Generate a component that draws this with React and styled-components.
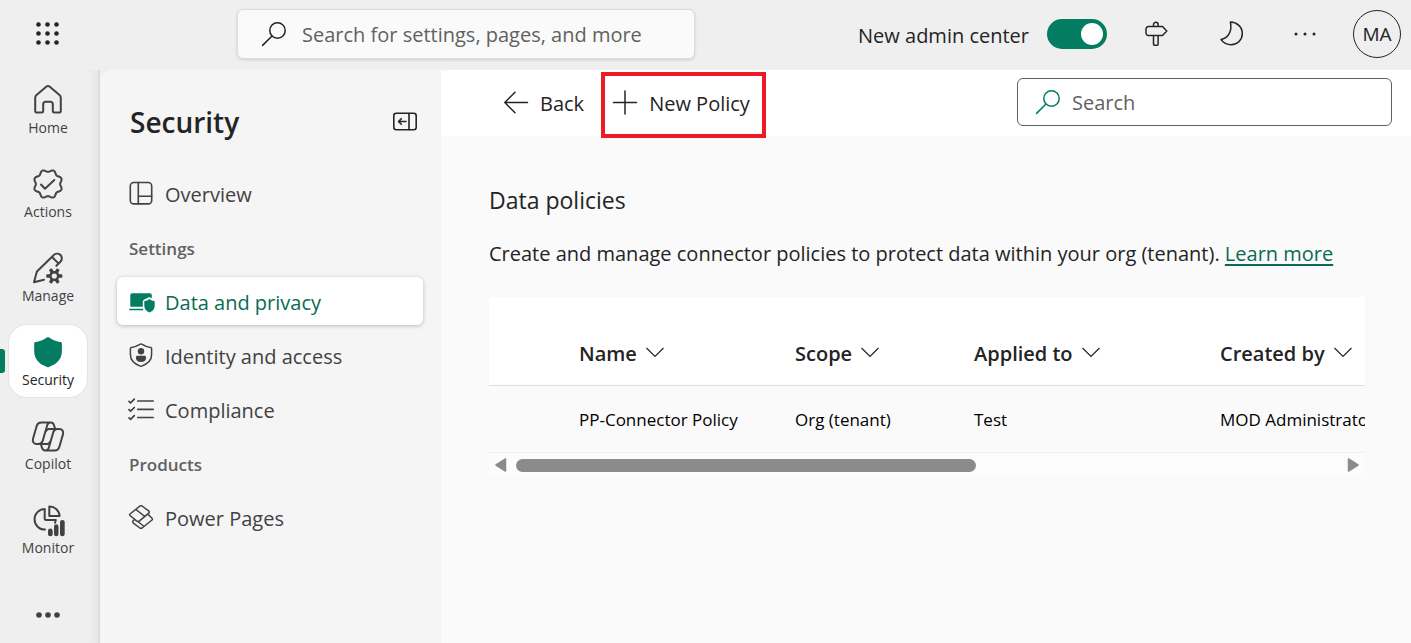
import React from "react";
import styled, { createGlobalStyle, css } from "styled-components";

const GREEN = "#037c62";

const GlobalStyle = createGlobalStyle`
  * { box-sizing: border-box; }
  body {
    margin: 0;
    background: #efefef;
    color: #242424;
    font-family: "Open Sans", "Noto Sans", sans-serif;
    font-size: 20px;
    line-height: 28px;
  }
  button, input { font: inherit; color: inherit; }
  button { background: none; border: 0; padding: 0; margin: 0; cursor: pointer; }
  h1, h2, h3, p, ul { margin: 0; padding: 0; }
  ul { list-style: none; }
`;

const Shell = styled.div`
  display: flex;
  flex-direction: column;
  height: 100vh;
  overflow: hidden;
`;

const Header = styled.header`
  display: flex;
  align-items: center;
  flex: 0 0 70px;
  padding: 0 10px 2px 24px;
`;

const LauncherButton = styled.button`
  display: grid;
  place-items: center;
  width: 48px;
  height: 48px;
`;

const GlobalSearch = styled.label`
  display: flex;
  align-items: center;
  gap: 16px;
  flex: 0 1 458px;
  height: 50px;
  margin-left: 165px;
  padding: 0 24px;
  background: #fafafa;
  border: 1px solid #dcdcdc;
  border-radius: 6px;
  box-shadow: 0 1px 3px rgba(0, 0, 0, 0.14);
`;

const SearchInput = styled.input`
  flex: 1;
  min-width: 0;
  padding: 2px 0 0;
  border: 0;
  outline: 0;
  background: transparent;
  &::placeholder { color: #616161; opacity: 1; }
`;

const Label = styled.span`
  padding-top: 3px;
`;

const HeaderActions = styled.div`
  display: flex;
  align-items: center;
  gap: 24px;
  margin-left: auto;
`;

const ToggleLabel = styled.label`
  display: flex;
  align-items: center;
  gap: 18px;
  white-space: nowrap;
`;

const Toggle = styled.input`
  appearance: none;
  display: flex;
  align-items: center;
  justify-content: flex-end;
  width: 60px;
  height: 30px;
  margin: 0;
  padding: 4px;
  border-radius: 15px;
  background: ${GREEN};
  &::before {
    content: "";
    width: 22px;
    height: 22px;
    border-radius: 50%;
    background: #fff;
  }
  &:not(:checked) { justify-content: flex-start; background: #8a8a8a; }
`;

const HeaderButton = styled.button`
  display: grid;
  place-items: center;
  width: 50px;
  height: 48px;
`;

const Avatar = styled.button`
  width: 48px;
  height: 48px;
  border: 1px solid #242424;
  border-radius: 50%;
  font-size: 19px;
`;

const Body = styled.div`
  display: flex;
  flex: 1;
  min-height: 0;
`;

const Rail = styled.nav`
  flex: 0 0 100px;
  padding: 3px 0 0;
  overflow: hidden;
  background: linear-gradient(to right, #efefef 88px, #e8e8e8 97px, #d8d8d8 100px);
`;

const RailList = styled.ul`
  display: flex;
  flex-direction: column;
  gap: 12px;
`;

const RailEntry = styled.li`
  display: flex;
  align-items: center;
  gap: 4px;
  &::before {
    content: "";
    width: 5px;
    height: 24px;
    border-radius: 0 3px 3px 0;
    background: ${(p) => (p.$active ? GREEN : "transparent")};
  }
`;

const RailButton = styled.button`
  display: flex;
  flex-direction: column;
  align-items: center;
  gap: 3px;
  width: 78px;
  height: 72px;
  padding-top: 11px;
  border-radius: 18px;
  color: #424242;
  font-size: 14px;
  line-height: 18px;
  ${(p) =>
    p.$active &&
    css`
      background: #fff;
      box-shadow: 0 0 0 1px #e3e3e3;
      color: #242424;
    `}
`;

const MoreButton = styled(RailButton)`
  justify-content: center;
  padding-top: 4px;
`;

const Sidebar = styled.aside`
  flex: 0 0 341px;
  padding: 32px 18px 0 17px;
  background: #f5f5f5;
  border-top-left-radius: 12px;
`;

const SidebarHead = styled.div`
  display: flex;
  align-items: center;
  justify-content: space-between;
  padding: 0 6px 0 13px;
  margin-bottom: 27px;
`;

const SidebarTitle = styled.h1`
  font-size: 28px;
  line-height: 40px;
  font-weight: 600;
`;

const SidebarList = styled.ul`
  display: flex;
  flex-direction: column;
  gap: 6px;
`;

const SectionLabel = styled.li`
  display: flex;
  align-items: center;
  height: 48px;
  padding-left: 12px;
  color: #616161;
  font-size: 17px;
  font-weight: 600;
`;

const SideLink = styled.a`
  display: flex;
  align-items: center;
  gap: 12px;
  height: 48px;
  padding-left: 12px;
  border-radius: 6px;
  color: #424242;
  text-decoration: none;
  ${(p) =>
    p.$active &&
    css`
      background: #fff;
      color: #0b6a55;
      box-shadow: 0 1px 4px rgba(0, 0, 0, 0.24);
    `}
`;

const Main = styled.main`
  flex: 1;
  min-width: 0;
  background: #fafafa;
`;

const Toolbar = styled.div`
  display: flex;
  align-items: center;
  gap: 5px;
  height: 66px;
  padding: 0 19px 2px 51px;
  background: #fff;
`;

const CommandButton = styled.button`
  position: relative;
  display: flex;
  align-items: center;
  gap: 12px;
  height: 48px;
  padding: 0 12px;
  white-space: nowrap;
`;

const HighlightedCommand = styled(CommandButton)`
  padding-right: 16px;
  &::after {
    content: "";
    position: absolute;
    inset: -6px 0 -12px;
    border: 4px solid #ed1c24;
  }
`;

const PageSearch = styled.label`
  display: flex;
  align-items: center;
  gap: 12px;
  flex: 0 1 375px;
  height: 48px;
  margin-left: auto;
  padding: 0 18px;
  background: #fff;
  border: 1px solid #616161;
  border-radius: 6px;
  color: ${GREEN};
`;

const Content = styled.section`
  padding: 48px 46px 0 48px;
`;

const PageTitle = styled.h2`
  font-size: 23px;
  line-height: 32px;
  font-weight: 400;
`;

const Description = styled.p`
  margin: 24px 0 29px;
  white-space: nowrap;
`;

const LearnMore = styled.a`
  color: #0b6a55;
  text-decoration: underline;
  text-decoration-thickness: 2px;
  text-underline-offset: 3px;
`;

const TableViewport = styled.div`
  overflow: hidden;
`;

const Table = styled.table`
  width: 180%;
  table-layout: fixed;
  border-collapse: separate;
  border-spacing: 0;
  text-align: left;
  white-space: nowrap;
`;

const Column = styled.col`
  width: ${(p) => (p.$width ? `${p.$width}px` : "auto")};
`;

const HeadCell = styled.th`
  height: 89px;
  padding: 25px 0 0;
  background: #fff;
  border-bottom: 1px solid #dedede;
  font-weight: 600;
`;

const SortButton = styled.button`
  display: flex;
  align-items: center;
  gap: 9px;
  font-weight: 600;
`;

const Cell = styled.td`
  height: 67px;
  padding: 2px 0 0;
  border-bottom: 1px solid #f0f0f0;
  color: #000;
  font-size: 17px;
`;

const ScrollBar = styled.div`
  display: flex;
  align-items: center;
  gap: 9px;
  height: 24px;
  padding: 0 6px;
  background: #fcfcfc;
`;

const ScrollTrack = styled.div`
  flex: 1;
`;

const ScrollThumb = styled.div`
  width: 56%;
  height: 13px;
  border-radius: 7px;
  background: #8b8b8b;
`;

const Svg = styled.svg`
  display: block;
  flex: none;
  overflow: visible;
`;

const Icon = ({ size = 24, width = 2, fill = "none", children }) => (
  <Svg
    width={size}
    height={size}
    viewBox={`0 0 ${size} ${size}`}
    fill={fill}
    stroke={fill === "none" ? "currentColor" : "none"}
    strokeWidth={width}
    strokeLinecap="round"
    strokeLinejoin="round"
    aria-hidden="true"
  >
    {children}
  </Svg>
);

const LauncherIcon = () => (
  <Icon fill="currentColor">
    {[2.5, 11.5, 20.5].map((y) => [2.5, 11.5, 20.5].map((x) => <circle key={`${x}-${y}`} cx={x} cy={y} r="2.3" />))}
  </Icon>
);

const SearchIcon = () => (
  <Icon width={1.5}>
    <circle cx="15.5" cy="8.5" r="7.7" />
    <path d="M10 14 .6 23.4" />
  </Icon>
);

const SignpostIcon = () => (
  <Icon width={1.5}>
    <path d="M9.500 4.500V2.600a2 2 0 0 1 4.600 0v1.900M4.500 4.600h14l4.300 4.400-4.300 4.400h-14a2.500 2.500 0 0 1-2.500-2.500V7.100a2.500 2.500 0 0 1 2.500-2.500ZM9.500 13.400v8.800c0 .7.4 1 1 1h2.600c.6 0 1-.3 1-1v-8.800" />
  </Icon>
);

const MoonIcon = () => (
  <Icon width={1.5}>
    <path d="M12.400 0C19 .2 24.300 4.900 24.300 11.500c0 6.300-4.900 11.200-11.200 11.200-4.200 0-7.900-2-10.100-5.100 6.500-1.500 11.500-7.100 9.400-17.600Z" />
  </Icon>
);

const HeaderDotsIcon = () => (
  <Icon fill="currentColor">
    {[4, 13, 22].map((x) => <circle key={x} cx={x} cy="12" r="1.5" />)}
  </Icon>
);

const HomeIcon = () => (
  <Icon size={32}>
    <path d="M14.500 2.600a2.300 2.300 0 0 1 3 0l10 8.500c.9.700 1.300 1.600 1.300 2.700v13.400a1.400 1.400 0 0 1-1.400 1.400h-5.200a1.400 1.400 0 0 1-1.400-1.400V20a2.200 2.200 0 0 0-2.200-2.200h-5.200a2.200 2.200 0 0 0-2.200 2.200v7.200a1.400 1.400 0 0 1-1.400 1.400H4.600a1.400 1.400 0 0 1-1.400-1.400V13.800c0-1.100.5-2 1.300-2.700Z" />
  </Icon>
);

const wavyRing = (cx, cy, radiusAt) =>
  Array.from({ length: 144 }, (_, i) => {
    const angle = (i / 144) * Math.PI * 2;
    const r = radiusAt(angle);
    return `${(cx + r * Math.cos(angle)).toFixed(2)} ${(cy + r * Math.sin(angle)).toFixed(2)}`;
  }).join("L");

const starburst = `M${wavyRing(16, 16, (a) => 13.3 + 1.2 * Math.cos(8 * (a - Math.PI / 8)))}Z`;
const gear = `M${wavyRing(22.3, 24, (a) => 6.600 + 1.500 * Math.tanh(3 * Math.cos(6 * a)))}Z`;

const ActionsIcon = () => (
  <Icon size={32}>
    <path d={starburst} />
    <path d="m9 16.500 4 4.300 9.300-8.800" />
  </Icon>
);

const ManageIcon = () => (
  <Icon size={32}>
    <path d="M12 27.700 2 30.200l2.600-9.600c.2-.7.600-1.300 1.100-1.800L21.600 3.200a4.600 4.600 0 0 1 7 6.300l-4.200 4.300M20 5l6.700 6.600" />
    <path
      d={`${gear}M22.300 21.400a2.600 2.600 0 1 0 0 5.200 2.600 2.600 0 0 0 0-5.200Z`}
      fill="currentColor"
      fillRule="evenodd"
      stroke="none"
    />
  </Icon>
);

const shieldPath = "M14.800 1.500a1.900 1.900 0 0 1 2.400 0c3.500 2.700 7.300 4.100 11.400 4.400.8.100 1.300.6 1.300 1.400V15c0 7.600-4.200 12.700-12.900 15.900-.7.300-1.300.3-2 0C6.300 27.700 2.200 22.600 2.200 15V7.300c0-.8.500-1.300 1.300-1.400 4.100-.3 7.800-1.700 11.300-4.400Z";

const ShieldIcon = () => (
  <Icon size={32} fill={GREEN}>
    <path d={shieldPath} />
  </Icon>
);

const copilotHalf =
  "M18.500 2.500C16.500 2.500 15.700 3.700 15.200 5.300L10.800 20.500C10.100 23 9 24 6.800 24H4.600C1.800 24 .2 21.600 1 18.800L4.700 6C5.400 3.600 6.900 2.500 9.200 2.500H18.800C20.800 2.500 21.500 3.500 22 5.200L23.300 9.300M6.800 24H15C16.800 24 17.500 23.200 18 21.800";

const CopilotIcon = () => (
  <Icon size={32}>
    <path d={copilotHalf} />
    <path d={copilotHalf} transform="rotate(180 16 16.500)" />
  </Icon>
);

const MonitorIcon = () => (
  <Icon size={32}>
    <path d="M13 25.600A10.300 10.300 0 1 1 12.700 5v9.500c0 1 .5 1.500 1.500 1.500h9.600c-.1 1-.4 1.900-.8 2.700M17.300 2.500v9.600h10.300A10 10 0 0 0 17.300 2.500Z" />
    <g fill="currentColor" stroke="none">
      <rect x="16" y="24.600" width="4.700" height="7.700" rx="2.300" />
      <rect x="22" y="20.300" width="4.500" height="12" rx="2.200" />
      <rect x="28" y="16" width="4.700" height="16.300" rx="2.300" />
    </g>
  </Icon>
);

const MoreIcon = () => (
  <Icon size={32} fill="currentColor">
    {[7, 16, 25].map((x) => <circle key={x} cx={x} cy="16" r="2.800" />)}
  </Icon>
);

const CollapseIcon = () => (
  <Icon width={1.600}>
    <rect x=".8" y="3.300" width="22.400" height="16.400" rx="2.500" />
    <path d="M16 3.500v16M13 11.500H5.600M8.300 8.700 5.500 11.500l2.800 2.800" />
  </Icon>
);

const OverviewIcon = () => (
  <Icon width={1.600}>
    <rect x="1.300" y="1.500" width="21.400" height="21.400" rx="3.500" />
    <path d="M9.300 1.500v21.400M9.300 15.300h13.400" />
  </Icon>
);

const DataIcon = () => (
  <Icon fill={GREEN}>
    <path d="M3.500 4.300h17.300a2 2 0 0 1 2 2v3.200l-2.300-1.400-5.300 2.500-1.400 1.400v5.800H1.300V6.300a2 2 0 0 1 2.200-2Z" />
    <path d="M.8 19.800h13.400v1.500H.8a.7.7 0 0 1 0-1.500Z" />
    <path d="M20.500 10c1.400 1.200 2.900 1.900 4.700 2.100.3 0 .5.300.5.600v3.900c0 3.200-1.600 5.500-5.200 7-3.600-1.500-5.200-3.800-5.200-7v-3.900c0-.3.200-.6.500-.6 1.800-.2 3.300-.9 4.700-2.100Z" />
  </Icon>
);

const IdentityIcon = () => (
  <Icon width={1.500}>
    <path d="M11.300 1.200a1.200 1.200 0 0 1 1.400 0C15.700 3.200 18.600 4.200 21.700 4.400c.5 0 .9.400.9.900v6.300c0 5.500-3.200 9.200-9.900 11.500a2 2 0 0 1-1.400 0C4.600 20.800 1.400 17.100 1.400 11.600V5.300c0-.5.400-.9.900-.9 3.100-.2 6-1.200 9-3.200Z" />
    <g fill="currentColor" stroke="none">
      <circle cx="12" cy="8.300" r="3.200" />
      <path d="M8.500 12.800h7c.9 0 1.600.7 1.600 1.600 0 3-1.900 4.600-5.100 4.600s-5.100-1.600-5.100-4.600c0-.9.700-1.600 1.600-1.600Z" />
    </g>
  </Icon>
);

const ComplianceIcon = () => (
  <Icon width={1.700}>
    {[4, 12.300, 20.500].map((y) => (
      <path key={y} d={`M8.800 ${y}h15.400M0 ${y + 0.300}l1.600 1.600 3.700-3.700`} />
    ))}
  </Icon>
);

const PowerPagesIcon = () => (
  <Icon width={1.500}>
    <path d="M7.500 15.900 1 10.500Q.2 9.800 1 9L10.900 1Q12 .3 13.100 1L19.600 5.900Q21 7 19.800 8.200L10.500 15.900Q9 17 7.500 15.900ZM6.800 4.300 15.800 11.500" />
    <path d="M19 9.200 23 13.300Q23.900 14.200 23 15L13.100 23Q12 23.700 10.900 23L4.400 18.100Q3 17 4.200 15.800L5.500 14.500M8.800 16.500 14.500 21" />
  </Icon>
);

const BackIcon = () => (
  <Icon width={1.500}>
    <path d="M23.500 12.500H.8M11 2.300.8 12.500 11 22.700" />
  </Icon>
);

const PlusIcon = () => (
  <Icon width={1.500}>
    <path d="M12 1v23M.5 12.500h23" />
  </Icon>
);

const SortIcon = () => (
  <Svg width="18" height="18" viewBox="0 0 18 18" fill="none" stroke="currentColor" strokeWidth="1.200" aria-hidden="true">
    <path d="m.5 3 8.500 8.500 8.500-8.500" />
  </Svg>
);

const ScrollArrow = ({ right }) => (
  <Svg width="12" height="14" viewBox="0 0 12 14" fill="#8b8b8b" stroke="#8b8b8b" strokeLinejoin="round" strokeWidth="1.500" aria-hidden="true">
    <path d={right ? "M1.500 1v12l9.500-6Z" : "M10.500 1v12L1 7Z"} />
  </Svg>
);

const railItems = [
  ["Home", HomeIcon],
  ["Actions", ActionsIcon],
  ["Manage", ManageIcon],
  ["Security", ShieldIcon],
  ["Copilot", CopilotIcon],
  ["Monitor", MonitorIcon],
];

const sideItems = [
  { label: "Overview", Glyph: OverviewIcon },
  { label: "Settings" },
  { label: "Data and privacy", Glyph: DataIcon, active: true },
  { label: "Identity and access", Glyph: IdentityIcon },
  { label: "Compliance", Glyph: ComplianceIcon },
  { label: "Products" },
  { label: "Power Pages", Glyph: PowerPagesIcon },
];

const columns = ["Name", "Scope", "Applied to", "Created by"];
const policies = [["PP-Connector Policy", "Org (tenant)", "Test", "MOD Administrator"]];

export default function App() {
  return (
    <Shell>
      <GlobalStyle />
      <Header>
        <LauncherButton aria-label="App launcher"><LauncherIcon /></LauncherButton>
        <GlobalSearch>
          <SearchIcon />
          <SearchInput type="text" aria-label="Search the admin center" placeholder="Search for settings, pages, and more" />
        </GlobalSearch>
        <HeaderActions>
          <ToggleLabel>
            <Label>New admin center</Label>
            <Toggle type="checkbox" role="switch" defaultChecked />
          </ToggleLabel>
          <HeaderButton aria-label="Guide"><SignpostIcon /></HeaderButton>
          <HeaderButton aria-label="Dark mode"><MoonIcon /></HeaderButton>
          <HeaderButton aria-label="More options"><HeaderDotsIcon /></HeaderButton>
          <Avatar>MA</Avatar>
        </HeaderActions>
      </Header>
      <Body>
        <Rail aria-label="Main">
          <RailList>
            {railItems.map(([label, Glyph]) => (
              <RailEntry key={label} $active={label === "Security"}>
                <RailButton $active={label === "Security"}>
                  <Glyph />
                  {label}
                </RailButton>
              </RailEntry>
            ))}
            <RailEntry>
              <MoreButton aria-label="More"><MoreIcon /></MoreButton>
            </RailEntry>
          </RailList>
        </Rail>
        <Sidebar>
          <SidebarHead>
            <SidebarTitle>Security</SidebarTitle>
            <button aria-label="Collapse"><CollapseIcon /></button>
          </SidebarHead>
          <SidebarList>
            {sideItems.map(({ label, Glyph, active }) =>
              Glyph ? (
                <li key={label}>
                  <SideLink href="#" $active={active}>
                    <Glyph />
                    <Label>{label}</Label>
                  </SideLink>
                </li>
              ) : (
                <SectionLabel key={label}><Label>{label}</Label></SectionLabel>
              )
            )}
          </SidebarList>
        </Sidebar>
        <Main>
          <Toolbar>
            <CommandButton><BackIcon /><Label>Back</Label></CommandButton>
            <HighlightedCommand><PlusIcon /><Label>New Policy</Label></HighlightedCommand>
            <PageSearch>
              <SearchIcon />
              <SearchInput type="text" aria-label="Search policies" placeholder="Search" />
            </PageSearch>
          </Toolbar>
          <Content>
            <PageTitle>Data policies</PageTitle>
            <Description>
              Create and manage connector policies to protect data within your org (tenant).{" "}
              <LearnMore href="#">Learn more</LearnMore>
            </Description>
            <TableViewport>
              <Table>
                <colgroup>
                  <Column $width={90} />
                  <Column $width={216} />
                  <Column $width={179} />
                  <Column $width={246} />
                  <Column />
                </colgroup>
                <thead>
                  <tr>
                    <HeadCell as="td" />
                    {columns.map((name) => (
                      <HeadCell key={name} scope="col">
                        <SortButton>{name}<SortIcon /></SortButton>
                      </HeadCell>
                    ))}
                  </tr>
                </thead>
                <tbody>
                  {policies.map((row) => (
                    <tr key={row[0]}>
                      <Cell />
                      {row.map((value) => <Cell key={value}>{value}</Cell>)}
                    </tr>
                  ))}
                </tbody>
              </Table>
            </TableViewport>
            <ScrollBar aria-hidden="true">
              <ScrollArrow />
              <ScrollTrack><ScrollThumb /></ScrollTrack>
              <ScrollArrow right />
            </ScrollBar>
          </Content>
        </Main>
      </Body>
    </Shell>
  );
}
